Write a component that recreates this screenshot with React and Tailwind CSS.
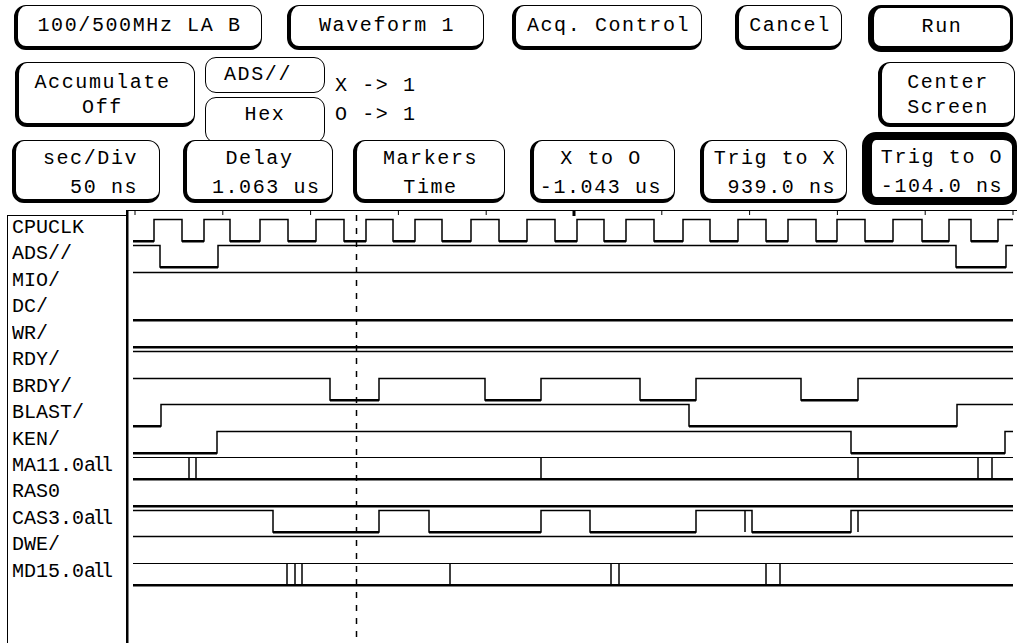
import React from 'react';

// waveform area geometry (page coords)
const OX = 126;
const OY = 208;
const START = 133;
const END = 1013;
const PITCH = 26.45;

const hi = (i) => Math.round(219 + PITCH * i) - OY;
const lo = (i) => hi(i) + 22;

const rows = [
  { name: 'CPUCLK', kind: 'bit', start: 0, edges: [154, 182, 204, 230, 260, 288, 316, 344, 366, 393, 415, 442, 471, 499, 527, 555, 577, 604, 626, 654, 683, 710, 738, 766, 788, 816, 837, 865, 893, 922, 949, 971, 998] },
  { name: 'ADS//', kind: 'bit', start: 1, edges: [160, 218, 956, 1006] },
  { name: 'MIO/', kind: 'bit', start: 1, edges: [] },
  { name: 'DC/', kind: 'bit', start: 0, edges: [] },
  { name: 'WR/', kind: 'bit', start: 0, edges: [] },
  { name: 'RDY/', kind: 'bit', start: 1, edges: [] },
  { name: 'BRDY/', kind: 'bit', start: 1, edges: [330, 379, 485, 541, 640, 696, 801, 858] },
  { name: 'BLAST/', kind: 'bit', start: 0, edges: [161, 689, 957] },
  { name: 'KEN/', kind: 'bit', start: 0, edges: [217, 851, 1005] },
  { name: 'MA11.0', all: true, kind: 'bus', edges: [189, 196, 541, 858, 978, 992] },
  { name: 'RAS0', kind: 'bit', start: 0, edges: [] },
  { name: 'CAS3.0', all: true, kind: 'bit', start: 1, edges: [273, 379, 429, 541, 590, 696, 752, 851], marks: [745, 858] },
  { name: 'DWE/', kind: 'bit', start: 1, edges: [] },
  { name: 'MD15.0', all: true, kind: 'bus', edges: [287, 295, 302, 450, 611, 619, 766, 780] },
];

function Bit({ row, start, edges, marks = [] }) {
  const yh = hi(row) + 0.5;
  const yl = lo(row);
  let level = start;
  let x = START - OX;
  let d = `M${x} ${level ? yh : yl}`;
  const lows = [];
  for (const e of edges) {
    const ex = e - OX;
    if (!level) lows.push([x, ex]);
    d += ` H${ex} V${level ? yl : yh}`;
    level = 1 - level;
    x = ex;
  }
  const last = END - OX;
  if (!level) lows.push([x, last]);
  d += ` H${last}`;
  return (
    <g>
      <path d={d} fill="none" stroke="black" strokeWidth="1.5" />
      {lows.map(([a, b], k) => (
        <rect key={k} x={a} y={yl - 1} width={b - a} height={2.5} fill="black" />
      ))}
      {marks.map((m) => (
        <line key={m} x1={m - OX} x2={m - OX} y1={yh} y2={yl} stroke="black" strokeWidth="1.5" />
      ))}
    </g>
  );
}

function Bus({ row, edges }) {
  const yh = hi(row) + 0.5;
  const yl = lo(row);
  return (
    <g>
      <line x1={START - OX} x2={END - OX} y1={yh} y2={yh} stroke="black" strokeWidth="1.2" />
      <rect x={START - OX} y={yl - 1} width={END - START} height={2.5} fill="black" />
      {edges.map((e) => (
        <line key={e} x1={e - OX} x2={e - OX} y1={yh} y2={yl} stroke="black" strokeWidth="1.5" />
      ))}
    </g>
  );
}

function Waveforms() {
  const ticks = Array.from({ length: 11 }, (_, k) => 135 + 87.8 * k - OX);
  return (
    <svg width="891" height="435" className="block">
      <line x1="0" x2="891" y1="2.5" y2="2.5" stroke="black" strokeWidth="1" />
      <rect x="0" y="2" width="2.5" height="433" fill="black" />
      {ticks.map((t, k) =>
        k === 5 ? (
          <rect key={k} x={t - 1.5} y="2" width="3" height="6" fill="black" />
        ) : (
          <line key={k} x1={t} x2={t} y1="2" y2="7" stroke="black" strokeWidth="1" />
        )
      )}
      <line x1="230.5" x2="230.5" y1="7" y2="435" stroke="black" strokeWidth="1.5" strokeDasharray="6 7" />
      {rows.map((r, i) =>
        r.kind === 'bus' ? (
          <Bus key={i} row={i} edges={r.edges} />
        ) : (
          <Bit key={i} row={i} start={r.start} edges={r.edges} marks={r.marks} />
        )
      )}
    </svg>
  );
}

const key = 'flex flex-col items-center justify-center bg-white border border-l-[4px] border-b-[4px] border-black rounded-[12px] leading-[26px] whitespace-pre';
const fld = 'flex flex-col items-center bg-white border border-l-[4px] border-b-[4px] border-black rounded-[12px] leading-[29px] whitespace-pre pt-[3px]';

export default function App() {
  return (
    <div className="w-[1017px] h-[643px] overflow-hidden bg-white text-black font-['Liberation_Mono',monospace] text-[20px] tracking-[1.6px]">
      {/* top row */}
      <div className="flex items-start h-[50px] pt-[5px]">
        <div className={key + ' ml-[14px] w-[248px] h-[45px]'}>100/500MHz LA B</div>
        <div className={key + ' ml-[25px] w-[197px] h-[45px]'}>Waveform 1</div>
        <div className={key + ' ml-[28px] w-[190px] h-[45px]'}>Acq. Control</div>
        <div className={key + ' ml-[33px] w-[107px] h-[45px]'}>Cancel</div>
        <div className="flex items-center justify-center ml-[26px] w-[145px] h-[47px] bg-white border-t-[3px] border-r-[3px] border-l-[6px] border-b-[6px] border-black rounded-[13px] leading-[26px]">
          Run
        </div>
      </div>

      {/* second row */}
      <div className="flex items-start h-[93px] pt-[7px]">
        <div className="flex flex-col items-center ml-[15px] mt-[5px] w-[180px] h-[65px] pt-[7px] pr-[8px] bg-white border border-l-[4px] border-b-[4px] border-black rounded-[12px] leading-[25px]">
          <span>Accumulate</span>
          <span>Off</span>
        </div>
        <div className="flex flex-col ml-[10px] w-[120px]">
          <div className="flex items-center justify-center h-[36px] pr-[14px] border border-black rounded-[11px] leading-[26px]">ADS//</div>
          <div className="flex justify-center mt-[4px] h-[46px] pt-[4px] border border-black rounded-[11px] leading-[26px]">Hex</div>
        </div>
        <div className="flex flex-col ml-[10px] mt-[14px] leading-[29px] whitespace-pre">
          <span>X -&gt; 1</span>
          <span>O -&gt; 1</span>
        </div>
        <div className="flex flex-col items-center ml-auto mr-[2px] mt-[5px] w-[137px] h-[65px] pt-[7px] bg-white border border-l-[4px] border-b-[4px] border-black rounded-[12px] leading-[25px]">
          <span>Center</span>
          <span>Screen</span>
        </div>
      </div>

      {/* third row */}
      <div className="flex items-start -mt-[11px] h-[76px]">
        <div className={fld + ' ml-[12px] mt-[8px] w-[148px] h-[63px] pl-[6px]'}>
          <span>sec/Div</span>
          <span>  50 ns</span>
        </div>
        <div className={fld + ' ml-[23px] mt-[8px] w-[150px] h-[63px]'}>
          <span>Delay</span>
          <span> 1.063 us</span>
        </div>
        <div className={fld + ' ml-[20px] mt-[8px] w-[152px] h-[63px]'}>
          <span>Markers</span>
          <span>Time</span>
        </div>
        <div className={fld + ' ml-[25px] mt-[8px] w-[145px] h-[63px] pr-[6px]'}>
          <span>X to O</span>
          <span>-1.043 us</span>
        </div>
        <div className={fld + ' ml-[25px] mt-[8px] w-[147px] h-[63px]'}>
          <span>Trig to X</span>
          <span> 939.0 ns</span>
        </div>
        <div className="flex flex-col items-center ml-[15px] w-[155px] h-[73px] pt-[3px] bg-white border-t-[8px] border-r-[5px] border-l-[10px] border-b-[8px] border-black rounded-[14px] leading-[29px] whitespace-pre">
          <span>Trig to O</span>
          <span>-104.0 ns</span>
        </div>
      </div>

      {/* waveform display */}
      <div className="flex h-[435px]">
        <div className="ml-[7px] mt-[7px] w-[119px] border-l border-t border-black pl-[4px] -tracking-[0px]">
          {rows.map((r) => (
            <div key={r.name} className="h-[26.45px] leading-[26.45px] -mt-0 whitespace-pre overflow-hidden first:-mt-[1px]">
              {r.name}
              {r.all && <span className="tracking-[-3.5px]">all</span>}
            </div>
          ))}
        </div>
        <Waveforms />
      </div>
    </div>
  );
}
